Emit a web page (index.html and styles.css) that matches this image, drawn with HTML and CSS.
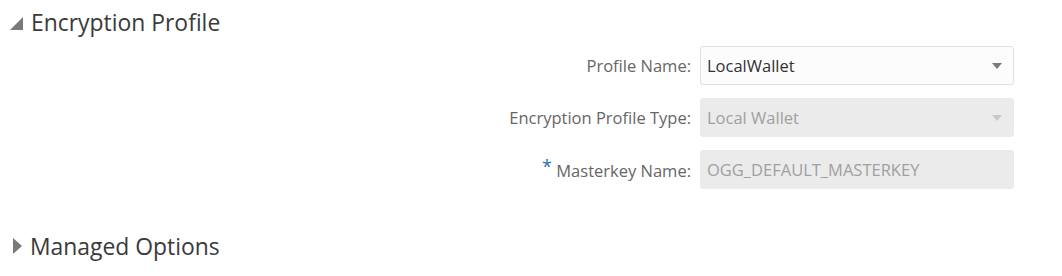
FILE: index.html
```html
<!DOCTYPE html>
<html>
<head>
<meta charset="utf-8">
<link rel="stylesheet" href="styles.css">
</head>
<body>
<div class="page">
  <div class="section-head">
    <span class="tri tri-down"></span>
    <span class="section-title">Encryption Profile</span>
  </div>
  <div class="form">
    <div class="row">
      <label class="label">Profile Name:</label>
      <div class="field select">
        <span class="value">LocalWallet</span>
        <span class="caret"></span>
      </div>
    </div>
    <div class="row">
      <label class="label">Encryption Profile Type:</label>
      <div class="field select disabled">
        <span class="value">Local Wallet</span>
        <span class="caret"></span>
      </div>
    </div>
    <div class="row">
      <label class="label"><span class="req">*</span> Masterkey Name:</label>
      <div class="field disabled">
        <span class="value">OGG_DEFAULT_MASTERKEY</span>
      </div>
    </div>
  </div>
  <div class="section-head collapsed">
    <span class="tri tri-right"></span>
    <span class="section-title">Managed Options</span>
  </div>
</div>
</body>
</html>
```
FILE: styles.css
```css
html, body {
  margin: 0;
  padding: 0;
  background: #ffffff;
}
body {
  font-family: "Open Sans", "Noto Sans", "Liberation Sans", sans-serif;
  color: #333333;
}
.page {
  width: 1062px;
  height: 276px;
  padding: 0 0 0 10px;
  box-sizing: border-box;
}
.section-head {
  display: flex;
  align-items: center;
  height: 44px;
}
.section-title {
  font-size: 22.9px;
  color: #3a3a3a;
  margin-left: 8px;
}
.tri {
  display: inline-block;
  width: 0;
  height: 0;
}
.tri-down {
  border-left: 13px solid transparent;
  border-bottom: 13px solid #7a7a7a;
  margin-top: 2px;
}
.tri-right {
  border-top: 8px solid transparent;
  border-bottom: 8px solid transparent;
  border-left: 9px solid #7a7a7a;
  margin-left: 3px;
  margin-right: 0px;
}
.form {
  display: flex;
  flex-direction: column;
  gap: 13px;
  padding-top: 2px;
  padding-right: 48px;
}
.row {
  display: flex;
  align-items: center;
  justify-content: flex-end;
}
.label {
  font-size: 16.5px;
  color: #666666;
  margin-right: 9px;
}
.req {
  color: #1f74b5;
  font-size: 18px;
  position: relative;
  top: -4px;
}
.field {
  width: 314px;
  height: 39px;
  box-sizing: border-box;
  border: 1px solid #dfdfdf;
  border-radius: 3px;
  background: #fcfcfc;
  display: flex;
  align-items: center;
  padding: 0 11px 0 6px;
  font-size: 16.5px;
  color: #333333;
}
.field.disabled {
  background: #ebebeb;
  border-color: #ebebeb;
  color: #a0a0a0;
}
.value {
  flex: 1;
}
.caret {
  width: 0;
  height: 0;
  border-left: 5px solid transparent;
  border-right: 5px solid transparent;
  border-top: 6px solid #7a7a7a;
}
.disabled .caret {
  border-top-color: #c8c8c8;
}
.collapsed {
  margin-top: 35px;
}
```
